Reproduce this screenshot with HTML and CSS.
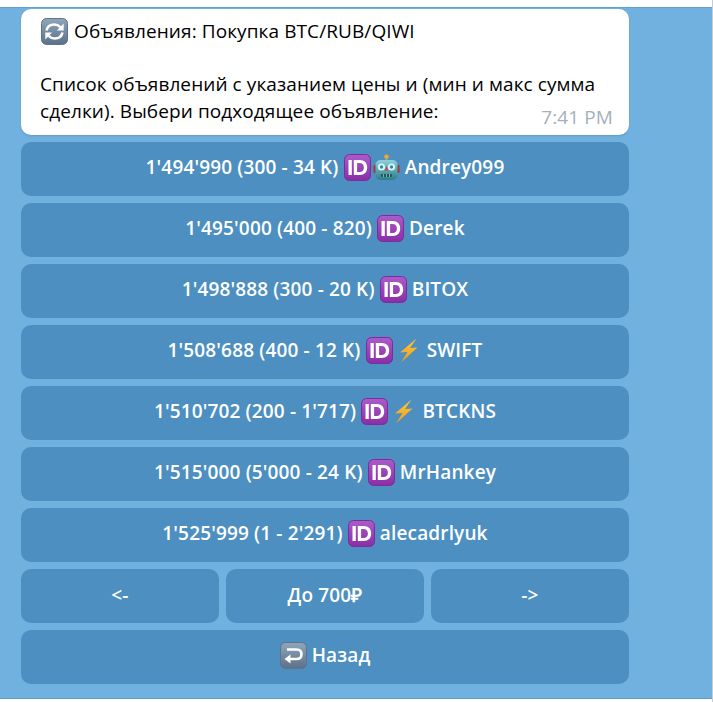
FILE: index.html
```html
<!DOCTYPE html>
<html lang="ru">
<head>
<meta charset="utf-8">
<title>Объявления</title>
<link rel="stylesheet" href="styles.css">
</head>
<body>
<svg class="defs" width="0" height="0" aria-hidden="true">
  <defs>
    <linearGradient id="gid" x1="0" y1="0" x2="0" y2="1"><stop offset="0" stop-color="#ab5cc9"/><stop offset="1" stop-color="#8a2da6"/></linearGradient>
    <linearGradient id="ggrey" x1="0" y1="0" x2="0" y2="1"><stop offset="0" stop-color="#8fa6bd"/><stop offset="1" stop-color="#5b7189"/></linearGradient>
    <linearGradient id="grobot" x1="0" y1="0" x2="0" y2="1"><stop offset="0" stop-color="#8ed0da"/><stop offset="1" stop-color="#2a7f8c"/></linearGradient>
    <linearGradient id="gbolt" x1="0" y1="0" x2="0" y2="1"><stop offset="0" stop-color="#ffc93c"/><stop offset="1" stop-color="#f49a16"/></linearGradient>
    <symbol id="i-id" viewBox="0 0 27 27">
      <rect x="0.5" y="0.5" width="26" height="26" rx="5" fill="url(#gid)" stroke="#7f2a9c"/>
      <path d="M4.500 6h3.300v15H4.500z" fill="#fff"/>
      <path fill-rule="evenodd" d="M9.800 6h6c4.600 0 7.400 2.900 7.400 7.500s-2.800 7.500-7.400 7.500h-6zM13.100 8.900v9.200h2.500c2.800 0 4.300-1.800 4.300-4.600s-1.500-4.600-4.300-4.600z" fill="#fff"/>
    </symbol>
    <symbol id="i-robot" viewBox="0 0 27 27">
      <circle cx="13.500" cy="2.800" r="2.300" fill="#f5a623"/>
      <rect x="12.500" y="4" width="2" height="3" fill="#9aa7ad"/>
      <rect x="0.500" y="11" width="3" height="8" rx="1" fill="#a33b33"/>
      <rect x="23.500" y="11" width="3" height="8" rx="1" fill="#a33b33"/>
      <rect x="2.500" y="6" width="22" height="20" rx="5" fill="url(#grobot)"/>
      <circle cx="8.500" cy="13" r="3.600" fill="#d8f6fa"/>
      <circle cx="18.500" cy="13" r="3.600" fill="#d8f6fa"/>
      <circle cx="8.500" cy="13" r="1.700" fill="#2a8fa3"/>
      <circle cx="18.500" cy="13" r="1.700" fill="#2a8fa3"/>
      <path d="M13.500 12l1.800 4.500h-3.600z" fill="#d8413a"/>
      <rect x="8" y="20" width="11" height="3" rx="1" fill="#24525b"/>
      <path d="M10.500 20v3M13.500 20v3M16.500 20v3" stroke="#a9c6cc" stroke-width="0.800"/>
    </symbol>
    <symbol id="i-bolt" viewBox="0 0 27 27">
      <path d="M21.500 1.500L5 15.500l7.500-.5L6 25.500 22.500 10.500l-7.500.6z" fill="url(#gbolt)"/>
    </symbol>
    <symbol id="i-refresh" viewBox="0 0 27 27">
      <rect x="0.500" y="0.500" width="26" height="26" rx="5" fill="url(#ggrey)" stroke="#5f7488"/>
      <path d="M5.500 12.500c.8-3.800 4-6 7.800-6 2.500 0 4.500 1 6 2.600" fill="none" stroke="#fff" stroke-width="2.600"/>
      <path d="M22.700 5.600v6.800h-6.800z" fill="#fff"/>
      <path d="M21.500 14.500c-.8 3.800-4 6-7.800 6-2.500 0-4.500-1-6-2.600" fill="none" stroke="#fff" stroke-width="2.600"/>
      <path d="M4.300 21.400v-6.800h6.800z" fill="#fff"/>
    </symbol>
    <symbol id="i-back" viewBox="0 0 27 27">
      <rect x="0.500" y="0.500" width="26" height="26" rx="5" fill="url(#ggrey)" stroke="#5f7488"/>
      <path d="M7 7.500h9.500c3 0 5 1.800 5 4.700s-2 4.800-5 4.800H9" fill="none" stroke="#fff" stroke-width="2.600"/>
      <path d="M10.500 12.500v9L4.500 17z" fill="#fff"/>
    </symbol>
  </defs>
</svg>
<main class="chat">
  <section class="bubble">
    <p class="line"><svg class="emoji lead"><use href="#i-refresh"/></svg> Объявления: Покупка BTC/RUB/QIWI</p>
    <p class="line blank">&nbsp;</p>
    <p class="line">Список объявлений с указанием цены и (мин и макс сумма</p>
    <p class="line">сделки). Выбери подходящее объявление:</p>
    <span class="time">7:41 PM</span>
  </section>
  <nav class="keyboard">
    <button class="key wide"><span class="label">1'494'990 (300 - 34 K) <svg class="emoji"><use href="#i-id"/></svg><svg class="emoji next"><use href="#i-robot"/></svg> Andrey099</span></button>
    <button class="key wide"><span class="label">1'495'000 (400 - 820) <svg class="emoji"><use href="#i-id"/></svg> Derek</span></button>
    <button class="key wide"><span class="label">1'498'888 (300 - 20 K) <svg class="emoji"><use href="#i-id"/></svg> BITOX</span></button>
    <button class="key wide"><span class="label">1'508'688 (400 - 12 K) <svg class="emoji"><use href="#i-id"/></svg><svg class="emoji next"><use href="#i-bolt"/></svg> SWIFT</span></button>
    <button class="key wide"><span class="label">1'510'702 (200 - 1'717) <svg class="emoji"><use href="#i-id"/></svg><svg class="emoji next"><use href="#i-bolt"/></svg> BTCKNS</span></button>
    <button class="key wide"><span class="label">1'515'000 (5'000 - 24 K) <svg class="emoji"><use href="#i-id"/></svg> MrHankey</span></button>
    <button class="key wide"><span class="label">1'525'999 (1 - 2'291) <svg class="emoji"><use href="#i-id"/></svg> alecadrlyuk</span></button>
    <button class="key"><span class="label">&lt;-</span></button>
    <button class="key"><span class="label">До 700₽</span></button>
    <button class="key"><span class="label">-&gt;</span></button>
    <button class="key wide"><span class="label"><svg class="emoji"><use href="#i-back"/></svg> Назад</span></button>
  </nav>
</main>
</body>
</html>
```
FILE: styles.css
```css
html, body {
  margin: 0;
  padding: 0;
  height: 702px;
  overflow: hidden;
  background: #ffffff;
}
body {
  box-sizing: border-box;
  padding-top: 7px;
  border-right: 1px solid #c4ccd4;
}
.defs {
  position: absolute;
}
.chat {
  box-sizing: border-box;
  height: 692px;
  padding: 1px 83px 0 21px;
  background: #71b1e0;
  border-top: 1px solid #62a0cf;
  border-bottom: 1px solid #5f9dcb;
  font-family: "Open Sans", sans-serif;
}
.bubble {
  position: relative;
  box-sizing: border-box;
  height: 126px;
  padding: 9px 19px 0;
  background: #ffffff;
  border-radius: 10px;
  box-shadow: 0 1px 2px rgba(60, 110, 150, 0.35);
  color: #000000;
  font-size: 19px;
  letter-spacing: 0.09px;
}
.line {
  margin: 0;
  height: 26.500px;
  line-height: 26.500px;
  white-space: nowrap;
}
.time {
  position: absolute;
  right: 16px;
  bottom: 5px;
  color: #a5afbb;
  font-size: 19px;
  line-height: 26px;
}
.emoji {
  width: 27px;
  height: 27px;
  vertical-align: -7px;
}
.lead {
  margin: 0 1px;
}
.next {
  margin-left: 2px;
}
.keyboard {
  display: grid;
  grid-template-columns: repeat(3, 1fr);
  gap: 7px;
  margin-top: 7px;
}
.key {
  height: 54px;
  padding: 0 0 3px;
  border: 0;
  border-radius: 10px;
  background: #4c8fc0;
  color: #ffffff;
  font-family: "Open Sans", sans-serif;
  font-size: 19px;
  font-weight: 600;
  letter-spacing: 0.15px;
  white-space: nowrap;
}
.wide {
  grid-column: 1 / -1;
}
```
